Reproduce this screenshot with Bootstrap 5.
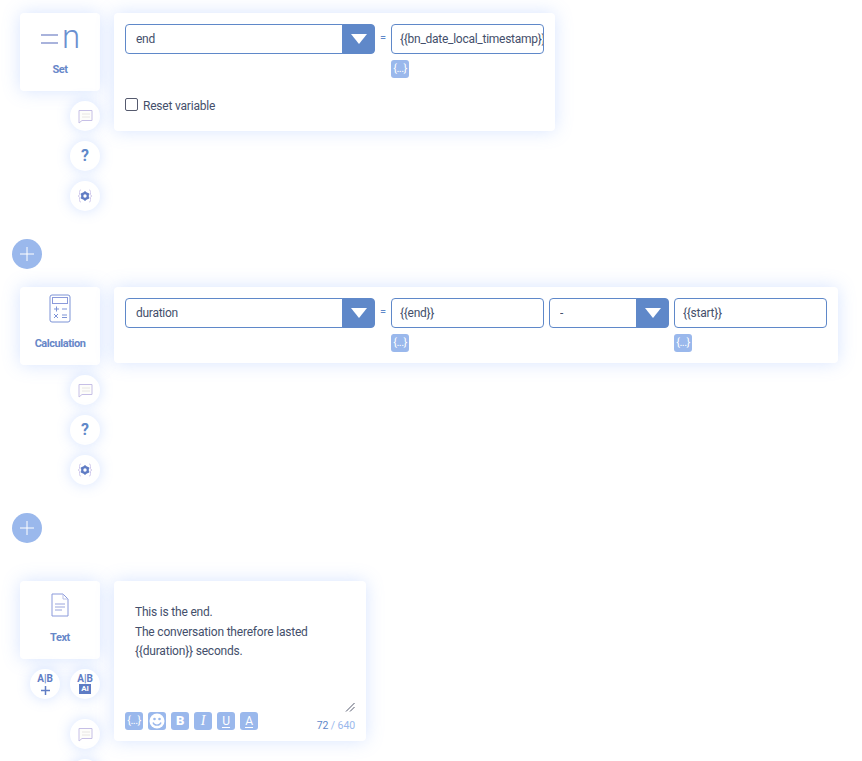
<!DOCTYPE html>
<html lang="en">
<head>
<meta charset="utf-8">
<title>Flow</title>
<link rel="stylesheet" href="https://cdn.jsdelivr.net/npm/bootstrap@5.3.0/dist/css/bootstrap.min.css">
<style>
html,body{height:761px;overflow:hidden;background:#fff;}
body{font-family:Roboto,"Liberation Sans",sans-serif;font-size:12px;color:#444f6b;letter-spacing:-.2px;}
.flow{padding-top:13px;}
.node{margin-left:20px;}
.side{width:80px;flex:none;}
.tile{width:80px;height:78px;background:#fff;border-radius:4px;box-shadow:0 0 18px rgba(100,150,255,.26);color:#6787c8;padding-top:2px;}
.tile-icon{height:40px;}
.tile-label{font-size:11px;font-weight:700;line-height:12px;margin-top:9px;letter-spacing:-.45px;}
.rnd{width:30px;height:30px;border-radius:50%;background:#fff;box-shadow:0 0 14px rgba(100,150,255,.28);margin-top:10px;color:#5f88c9;}
.rnd-row{gap:10px;}
.gapped{margin-top:10px;}
.panel{margin-left:14px;background:#fff;border-radius:4px;box-shadow:0 0 18px rgba(100,150,255,.26);padding:11px;}
.p1{width:441px;height:118px;}
.p2{width:724px;height:76px;}
.p3{width:252px;height:160px;padding:0;}
.adder{width:30px;height:30px;border-radius:50%;background:#9ab8ec;margin-left:12px;}
.a1{margin-top:28px;margin-bottom:18px;}
.a2{margin-top:28px;margin-bottom:38px;}
.pick{width:250px;height:30px;flex-wrap:nowrap;}
.pick.narrow{width:120px;margin-left:5px;}
.pick .form-control,.fld{height:30px;min-height:30px;padding:0 0 0 8px;font-size:12px;color:#444f6b;border:1px solid #5f88c9;border-radius:4px;box-shadow:none;font-family:inherit;letter-spacing:-.27px;}
.pick .form-control{padding-left:10px;}
.pick .input-group-text{width:33px;padding:0;justify-content:center;background:#5f88c9;border:1px solid #5f88c9;border-radius:0 4px 4px 0;}
.eq{width:16px;text-align:center;color:#5f88c9;line-height:28px;font-size:11px;}
.fldwrap{width:153px;}
.tagbtn{width:18px;height:18px;border-radius:3px;background:#9ab8ec;color:#fff;font-size:11px;letter-spacing:-.5px;line-height:17px;text-align:center;margin-top:6px;}
.ml5{margin-left:5px;}
.chk{margin-top:14px;}
.chk .form-check-input{width:13px;height:13px;margin:0;border:1px solid #555a6e;border-radius:2px;}
.chk label{margin-left:5px;line-height:13px;padding-top:4px;}
.txt{padding:22px 21px 0;line-height:19.5px;height:131px;}
.txtbar{padding:0 11px;gap:5px;}
.tool{width:18px;height:18px;border-radius:3px;background:#9ab8ec;color:#fff;font-size:12px;line-height:18px;text-align:center;}
.tool.b{font-weight:900;font-size:13px;}
.tool.i{font-style:italic;font-family:"Liberation Serif",serif;font-size:14px;}
.tool.tagged{font-size:11px;letter-spacing:-.5px;line-height:17px;}
.tool.u span{display:inline-block;line-height:12px;border-bottom:1px solid #fff;}
.counter{font-size:10.5px;color:#9ab8ec;margin-top:6px;letter-spacing:-.1px;}
.counter b{font-weight:400;color:#5f88c9;}
.grip{height:10px;padding-right:11px;margin-top:-10px;}
.nglyph{font-family:Roboto,sans-serif;font-weight:300;font-size:33px;line-height:36px;color:#6b90d0;padding-top:3px;}
.eqbars{width:17px;height:10px;border-top:2px solid #a9b3dc;border-bottom:2px solid #a9b3dc;margin-right:4px;margin-left:1px;margin-top:8px;}
.ab{font-size:10px;font-weight:700;line-height:11px;color:#5f7cc4;letter-spacing:0;}
.ai{display:block;width:12px;height:10px;line-height:10px;background:#5f7cc4;color:#fff;font-size:8px;font-weight:700;text-align:center;margin:0 auto;}
</style>
</head>
<body>
<div class="flow">

  <div class="node d-flex align-items-start">
    <div class="side">
      <div class="tile text-center">
        <div class="tile-icon d-flex justify-content-center align-items-center"><span class="eqbars"></span><span class="nglyph">n</span></div>
        <div class="tile-label">Set</div>
      </div>
      <div class="d-flex flex-column align-items-end">
        <div class="rnd d-flex align-items-center justify-content-center"><svg width="15" height="15" viewBox="0 0 15 15"><path d="M1 1.500h13v10H4L1 14z" fill="#fdfdfa" stroke="#c6bfe6"/><path d="M4 5h8M4 8h8" stroke="#e8e6e4"/></svg></div>
        <div class="rnd d-flex align-items-center justify-content-center fw-bold fs-6">?</div>
        <div class="rnd d-flex align-items-center justify-content-center"><svg width="16" height="14" viewBox="0 0 16 14"><path d="M4 1C2.500 1 2.500 2 2.500 3.500V5.500C2.500 6.500 1.500 7 1 7C1.500 7 2.500 7.500 2.500 8.500V10.500C2.500 12 2.500 13 4 13M12 1C13.500 1 13.500 2 13.500 3.500V5.500C13.500 6.500 14.500 7 15 7C14.500 7 13.500 7.500 13.500 8.500V10.500C13.500 12 13.500 13 12 13" fill="none" stroke="#cfc8ec"/><circle cx="8" cy="7" r="2.800" fill="none" stroke="#5f7cc4" stroke-width="2.200"/><path d="M8 2.200v2M8 9.800v2M3.800 4.600l1.700 1M10.500 8.400l1.700 1M3.800 9.400l1.700-1M10.500 5.600l1.700-1" stroke="#5f7cc4" stroke-width="1.600"/></svg></div>
      </div>
    </div>
    <div class="panel p1">
      <div class="d-flex align-items-start">
        <div class="input-group pick"><input class="form-control" value="end" readonly><span class="input-group-text"><svg width="16" height="10" viewBox="0 0 16 10"><path d="M0 0h16L8 10z" fill="#fff"/></svg></span></div>
        <div class="eq">=</div>
        <div class="fldwrap"><input class="form-control fld" value="{{bn_date_local_timestamp}}" readonly><div class="tagbtn">{...}</div></div>
      </div>
      <div class="form-check chk d-flex align-items-center p-0 mb-0"><input class="form-check-input" type="checkbox" id="c1"><label for="c1">Reset variable</label></div>
    </div>
  </div>

  <div class="adder a1 d-flex align-items-center justify-content-center"><svg width="16" height="16" viewBox="0 0 16 16"><path d="M8 1v14M1 8h14" stroke="#fff" stroke-width="1"/></svg></div>

  <div class="node d-flex align-items-start">
    <div class="side">
      <div class="tile text-center">
        <div class="tile-icon d-flex justify-content-center align-items-center"><svg width="22" height="30" viewBox="0 0 22 30"><rect x="1" y="1" width="20" height="27" rx="2" fill="#fff" stroke="#7d93d6"/><rect x="3.500" y="3.500" width="15" height="6" fill="#fff" stroke="#8b9adb"/><path d="M5 14h5M7.500 11.500v5M13 14h5M5 19l4 4M9 19l-4 4M13 20h5M13 22.500h5" stroke="#7d93d6" transform="translate(0 1)"/></svg></div>
        <div class="tile-label">Calculation</div>
      </div>
      <div class="d-flex flex-column align-items-end">
        <div class="rnd d-flex align-items-center justify-content-center"><svg width="15" height="15" viewBox="0 0 15 15"><path d="M1 1.500h13v10H4L1 14z" fill="#fdfdfa" stroke="#c6bfe6"/><path d="M4 5h8M4 8h8" stroke="#e8e6e4"/></svg></div>
        <div class="rnd d-flex align-items-center justify-content-center fw-bold fs-6">?</div>
        <div class="rnd d-flex align-items-center justify-content-center"><svg width="16" height="14" viewBox="0 0 16 14"><path d="M4 1C2.500 1 2.500 2 2.500 3.500V5.500C2.500 6.500 1.500 7 1 7C1.500 7 2.500 7.500 2.500 8.500V10.500C2.500 12 2.500 13 4 13M12 1C13.500 1 13.500 2 13.500 3.500V5.500C13.500 6.500 14.500 7 15 7C14.500 7 13.500 7.500 13.500 8.500V10.500C13.500 12 13.500 13 12 13" fill="none" stroke="#cfc8ec"/><circle cx="8" cy="7" r="2.800" fill="none" stroke="#5f7cc4" stroke-width="2.200"/><path d="M8 2.200v2M8 9.800v2M3.800 4.600l1.700 1M10.500 8.400l1.700 1M3.800 9.400l1.700-1M10.500 5.600l1.700-1" stroke="#5f7cc4" stroke-width="1.600"/></svg></div>
      </div>
    </div>
    <div class="panel p2">
      <div class="d-flex align-items-start">
        <div class="input-group pick"><input class="form-control" value="duration" readonly><span class="input-group-text"><svg width="16" height="10" viewBox="0 0 16 10"><path d="M0 0h16L8 10z" fill="#fff"/></svg></span></div>
        <div class="eq">=</div>
        <div class="fldwrap"><input class="form-control fld" value="{{end}}" readonly><div class="tagbtn">{...}</div></div>
        <div class="input-group pick narrow"><input class="form-control" value="-" readonly><span class="input-group-text"><svg width="16" height="10" viewBox="0 0 16 10"><path d="M0 0h16L8 10z" fill="#fff"/></svg></span></div>
        <div class="fldwrap ml5"><input class="form-control fld" value="{{start}}" readonly><div class="tagbtn">{...}</div></div>
      </div>
    </div>
  </div>

  <div class="adder a2 d-flex align-items-center justify-content-center"><svg width="16" height="16" viewBox="0 0 16 16"><path d="M8 1v14M1 8h14" stroke="#fff" stroke-width="1"/></svg></div>

  <div class="node d-flex align-items-start">
    <div class="side">
      <div class="tile text-center">
        <div class="tile-icon d-flex justify-content-center align-items-center"><svg class="mt-1" width="18" height="24" viewBox="0 0 18 24"><path d="M1 1h11l5 5v17H1z" fill="#fff" stroke="#8b9adb"/><path d="M12 1v5h5" fill="none" stroke="#b9c0e8"/><path d="M4 11h10M4 14h10M4 17h7" stroke="#9aa5dc"/></svg></div>
        <div class="tile-label">Text</div>
      </div>
      <div class="d-flex justify-content-end rnd-row">
        <div class="rnd text-center pt-1 ab">A|B<br><svg width="9" height="9" viewBox="0 0 9 9"><path d="M4.500 0v9M0 4.500h9" stroke="#5f7cc4" stroke-width="1.500"/></svg></div>
        <div class="rnd text-center pt-1 ab">A|B<span class="ai">AI</span></div>
      </div>
      <div class="d-flex flex-column align-items-end gapped">
        <div class="rnd d-flex align-items-center justify-content-center"><svg width="15" height="15" viewBox="0 0 15 15"><path d="M1 1.500h13v10H4L1 14z" fill="#fdfdfa" stroke="#c6bfe6"/><path d="M4 5h8M4 8h8" stroke="#e8e6e4"/></svg></div>
        <div class="rnd"></div>
      </div>
    </div>
    <div class="panel p3">
      <div class="txt">This is the end.<br>The conversation therefore lasted<br>{{duration}} seconds.</div>
      <div class="grip d-flex justify-content-end"><svg width="10" height="10" viewBox="0 0 10 10"><path d="M1 9.500L9.500 1M5 9.500L9.500 5" stroke="#555a6e" fill="none"/></svg></div>
      <div class="txtbar d-flex align-items-start">
        <div class="tool tagged">{...}</div>
        <div class="tool d-flex align-items-center justify-content-center"><svg width="16" height="16" viewBox="0 0 16 16"><circle cx="8" cy="8" r="7.500" fill="#fff"/><circle cx="5.500" cy="6" r="1.300" fill="#9ab8ec"/><circle cx="10.500" cy="6" r="1.300" fill="#9ab8ec"/><path d="M4 9.500c1 3.500 7 3.500 8 0" fill="none" stroke="#9ab8ec" stroke-width="1.300"/></svg></div>
        <div class="tool b">B</div>
        <div class="tool i">I</div>
        <div class="tool u"><span>U</span></div>
        <div class="tool u"><span>A</span></div>
        <div class="counter ms-auto"><b>72</b> / 640</div>
      </div>
    </div>
  </div>
</div>
<script src="https://cdn.jsdelivr.net/npm/bootstrap@5.3.0/dist/js/bootstrap.bundle.min.js"></script>
</body>
</html>
